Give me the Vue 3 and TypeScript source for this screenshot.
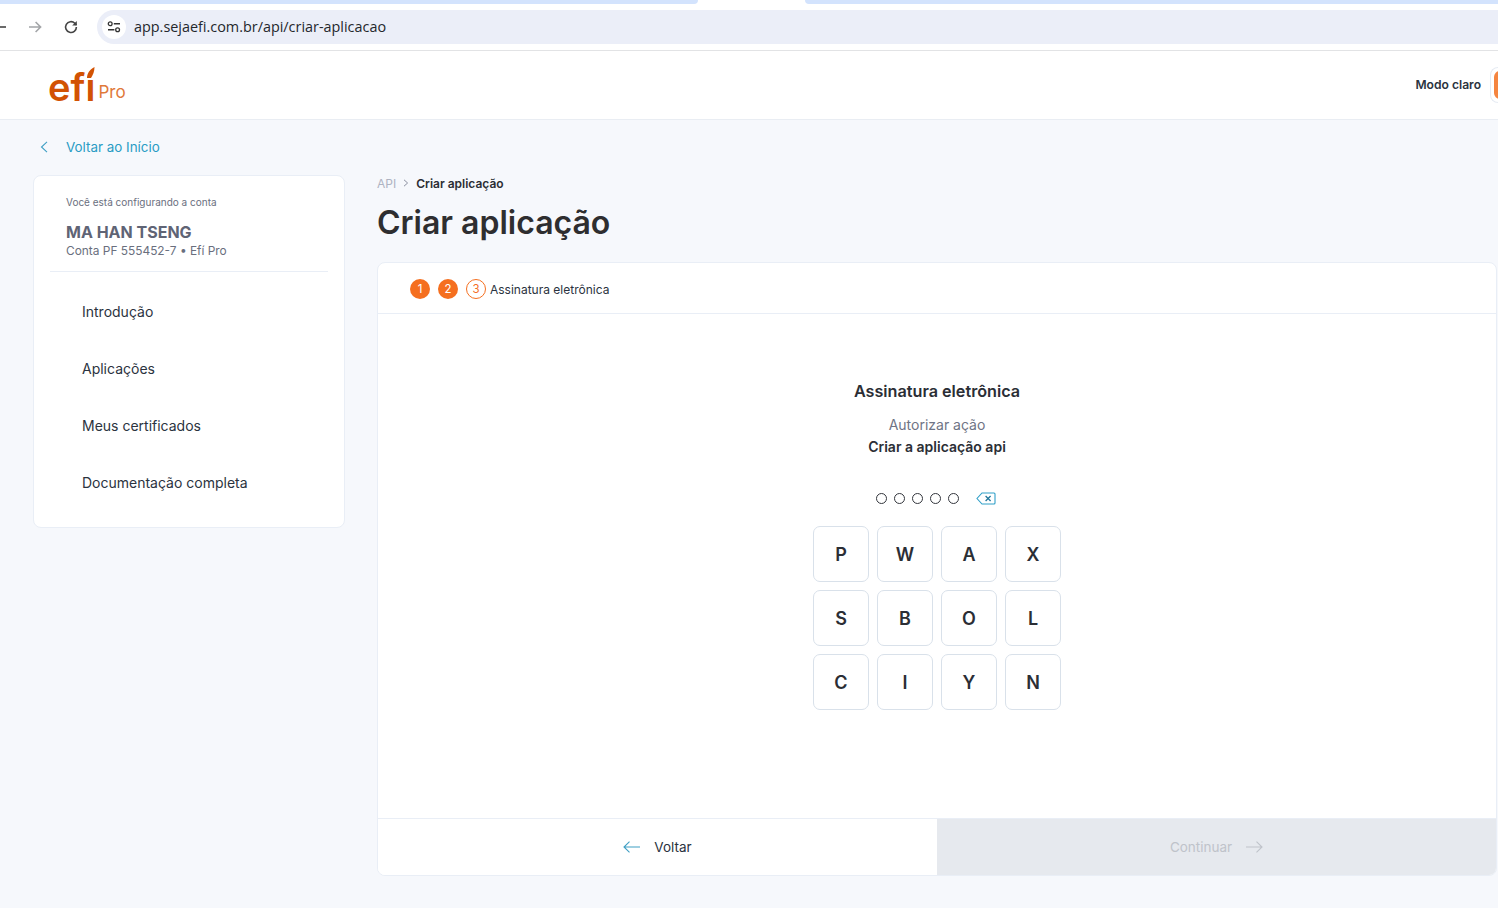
<script setup lang="ts">
const menu: string[] = ['Introdução', 'Aplicações', 'Meus certificados', 'Documentação completa']
const keys: string[] = ['P', 'W', 'A', 'X', 'S', 'B', 'O', 'L', 'C', 'I', 'Y', 'N']
const dots: number[] = [1, 2, 3, 4, 5]
</script>

<template>
  <div class="page">
    <div class="tabstrip">
      <div class="tab-a"></div>
      <div class="tab-b"></div>
    </div>
    <div class="toolbar">
      <svg class="nav-back" width="6" height="14" viewBox="0 0 6 14"><path d="M0 7h6" stroke="#444" stroke-width="1.6" /></svg>
      <svg class="nav-icon nav-fwd" width="16" height="16" viewBox="0 0 16 16"><path d="M2 8h11.5M8.6 3l5 5-5 5" fill="none" stroke="#a3a5a8" stroke-width="1.6" /></svg>
      <svg class="nav-icon nav-reload" width="16" height="16" viewBox="0 0 16 16"><path d="M13.400 8a5.400 5.400 0 1 1-1.600-3.800L13.400 6" fill="none" stroke="#444" stroke-width="1.6" /><path d="M13.800 1.900v4.600H9.200z" fill="#444" /></svg>
      <div class="omnibox">
        <span class="site-chip">
          <svg width="14" height="12" viewBox="0 0 14 12"><circle cx="3.2" cy="2.8" r="1.9" fill="none" stroke="#333" stroke-width="1.3" /><path d="M6.800 2.800h6.200M1 8.800h6.400" stroke="#333" stroke-width="1.4" /><circle cx="10.600" cy="8.800" r="1.9" fill="none" stroke="#333" stroke-width="1.3" /></svg>
        </span>
        <span class="url">app.sejaefi.com.br/api/criar-aplicacao</span>
      </div>
    </div>

    <header class="topbar">
      <div class="logo">
        <span class="logo-efi">
          efı
          <svg class="logo-accent" width="9" height="11" viewBox="0 0 9 11"><path d="M1 11C1 6 4 2.500 8.500 0 8.500 4 7 8 5 11z" fill="#d25203" /></svg>
        </span>
        <span class="logo-pro">Pro</span>
      </div>
      <div class="theme">
        <span class="theme-label">Modo claro</span>
        <div class="theme-switch"><div class="theme-knob"></div></div>
      </div>
    </header>

    <div class="backlink">
      <svg width="8" height="12" viewBox="0 0 8 12"><path d="M7 .8 1.500 6 7 11.200" fill="none" stroke="#3f9fc4" stroke-width="1.1" /></svg>
      <span>Voltar ao Início</span>
    </div>

    <div class="content">
      <aside class="sidebar">
        <div class="account">
          <p class="account-hint">Você está configurando a conta</p>
          <p class="account-name">MA HAN TSENG</p>
          <p class="account-sub">Conta PF 555452-7 • Efí Pro</p>
        </div>
        <nav class="menu">
          <a v-for="item in menu" :key="item" class="menu-item">{{ item }}</a>
        </nav>
      </aside>

      <main class="main">
        <div class="crumbs">
          <span class="crumb-root">API</span>
          <svg width="6" height="8" viewBox="0 0 6 8"><path d="M1 .8 4.600 4 1 7.200" fill="none" stroke="#8b90a0" stroke-width="1" /></svg>
          <span class="crumb-current">Criar aplicação</span>
        </div>
        <h1 class="title">Criar aplicação</h1>

        <section class="card">
          <div class="steps">
            <span class="step done">1</span>
            <span class="step done">2</span>
            <span class="step active">3</span>
            <span class="step-label">Assinatura eletrônica</span>
          </div>

          <div class="body">
            <h2 class="sign-title">Assinatura eletrônica</h2>
            <p class="sign-hint">Autorizar ação</p>
            <p class="sign-action">Criar a aplicação api</p>

            <div class="pin">
              <span v-for="d in dots" :key="d" class="dot"></span>
              <svg class="erase" width="20" height="13" viewBox="0 0 20 13">
                <path d="M6 1h12a1 1 0 0 1 1 1v9a1 1 0 0 1-1 1H6L1 6.500z" fill="#fff" stroke="#2f9fc8" stroke-width="1.1" />
                <path d="M9.600 4l5 5M14.600 4l-5 5" stroke="#23789c" stroke-width="1.3" />
              </svg>
            </div>

            <div class="keys">
              <button v-for="k in keys" :key="k" class="key" type="button">{{ k }}</button>
            </div>
          </div>

          <div class="actions">
            <button class="action back" type="button">
              <svg width="17" height="12" viewBox="0 0 17 12"><path d="M17 6H1M6.500.7 1 6l5.500 5.300" fill="none" stroke="#3f9fc4" stroke-width="1.1" /></svg>
              <span>Voltar</span>
            </button>
            <button class="action next" type="button">
              <span>Continuar</span>
              <svg width="17" height="12" viewBox="0 0 17 12"><path d="M0 6h16M10.500.7 16 6l-5.500 5.300" fill="none" stroke="#bfc3ca" stroke-width="1.1" /></svg>
            </button>
          </div>
        </section>
      </main>
    </div>
  </div>
</template>

<style>
html,
body {
  margin: 0;
  overflow: hidden;
  background: #f6f8fc;
}
</style>

<style scoped>
.page {
  width: 1498px;
  height: 908px;
  overflow: hidden;
  background: #f6f8fc;
  font-family: Inter, "Noto Sans", sans-serif;
  color: #2b2e35;
}

.tabstrip {
  display: flex;
  height: 4px;
  background: #fff;
}

.tab-a {
  width: 698px;
  background: #d3e3fd;
  border-bottom-right-radius: 6px;
}

.tab-b {
  margin-left: 107px;
  flex: 1;
  background: #d3e3fd;
  border-bottom-left-radius: 6px;
}

.toolbar {
  display: flex;
  align-items: center;
  height: 46px;
  background: #fff;
  border-bottom: 1px solid #e2e3e5;
}

.nav-fwd {
  margin-left: 21px;
}

.nav-reload {
  margin-left: 20px;
}

.omnibox {
  display: flex;
  align-items: center;
  height: 34px;
  margin-left: 18px;
  flex: 1;
  background: #ebeef8;
  border-radius: 17px 0 0 17px;
  padding-left: 5px;
}

.site-chip {
  display: flex;
  align-items: center;
  justify-content: center;
  width: 24px;
  height: 24px;
  border-radius: 50%;
  background: #fff;
}

.url {
  margin: 0 0 2px 8px;
  font-family: "Open Sans", sans-serif;
  font-size: 14.4px;
  color: #24272c;
}

.topbar {
  display: flex;
  align-items: center;
  justify-content: space-between;
  height: 68px;
  background: #fff;
  border-bottom: 1px solid #e9edf3;
}

.logo {
  display: flex;
  align-items: flex-end;
  margin: 4px 0 0 48px;
}

.logo-efi {
  position: relative;
  font-size: 38px;
  line-height: 34px;
  font-weight: 600;
  color: #d25203;
}

.logo-accent {
  position: absolute;
  right: 0;
  top: -3px;
}

.logo-pro {
  margin: 0 0 1px 3px;
  font-size: 17px;
  line-height: 22px;
  font-weight: 400;
  color: #e0793a;
}

.theme {
  display: flex;
  align-items: center;
  gap: 9px;
}

.theme-label {
  margin-bottom: 2px;
  font-size: 12.1px;
  font-weight: 600;
  color: #2b3340;
}

.theme-switch {
  width: 8px;
  height: 36px;
  padding: 3px 0 3px 3px;
  box-sizing: border-box;
  border: 1px solid #e6ebf3;
  border-right: 0;
  border-radius: 8px 0 0 8px;
  background: #fff;
}

.theme-knob {
  width: 10px;
  height: 100%;
  background: #f58540;
  border-radius: 6px 0 0 6px;
}

.backlink {
  display: flex;
  align-items: center;
  gap: 18px;
  height: 53px;
  padding: 0 0 2px 40px;
  font-size: 13.4px;
  color: #2a9cc4;
}

.content {
  display: flex;
  align-items: flex-start;
  gap: 32px;
  padding-left: 33px;
}

.sidebar {
  width: 312px;
  height: 353px;
  flex-shrink: 0;
  box-sizing: border-box;
  background: #fff;
  border: 1px solid #e9eef6;
  border-radius: 8px;
}

.account {
  margin: 0 16px;
  padding: 19px 16px 11px;
  border-bottom: 1px solid #e9eef6;
}

.account p {
  margin: 0;
}

.account-hint {
  font-size: 10px;
  line-height: 14px;
  color: #6a6f7e;
}

.account .account-name {
  margin-top: 13px;
  font-size: 16px;
  line-height: 20px;
  font-weight: 700;
  color: #5f6475;
}

.account-sub {
  font-size: 11.9px;
  line-height: 18px;
  color: #6a6f7e;
}

.menu {
  display: flex;
  flex-direction: column;
  padding-top: 11px;
}

.menu-item {
  height: 57px;
  line-height: 57px;
  padding-left: 48px;
  font-size: 14px;
  color: #2b3340;
}

.main {
  width: 1120px;
  flex-shrink: 0;
}

.crumbs {
  display: flex;
  align-items: center;
  gap: 7px;
  height: 16px;
  font-size: 12px;
}

.crumb-root {
  color: #aeb3c2;
}

.crumb-current {
  font-weight: 600;
  color: #2b2e35;
}

.title {
  margin: 12px 0 19px;
  font-size: 32px;
  line-height: 40px;
  font-weight: 600;
  color: #2e2e30;
}

.card {
  display: flex;
  flex-direction: column;
  height: 614px;
  box-sizing: border-box;
  background: #fff;
  border: 1px solid #e9eef6;
  border-radius: 8px;
  overflow: hidden;
}

.steps {
  display: flex;
  align-items: center;
  height: 51px;
  box-sizing: border-box;
  flex-shrink: 0;
  padding: 2px 0 0 32px;
  border-bottom: 1px solid #e9eef6;
}

.step {
  display: flex;
  align-items: center;
  justify-content: center;
  width: 20px;
  height: 20px;
  margin-right: 8px;
  box-sizing: border-box;
  border-radius: 50%;
  font-size: 11.5px;
}

.step.done {
  background: #f56f1f;
  color: #fff;
}

.step.active {
  margin-right: 4px;
  border: 1px solid #f56f1f;
  color: #f56f1f;
}

.step-label {
  font-size: 12px;
  color: #2b3340;
}

.body {
  flex: 1;
  display: flex;
  flex-direction: column;
  align-items: center;
  padding-top: 65px;
}

.sign-title {
  margin: 0;
  font-size: 16.2px;
  line-height: 24px;
  font-weight: 600;
  color: #2b2e35;
}

.sign-hint {
  margin: 11px 0 0;
  font-size: 14px;
  line-height: 22px;
  color: #6f7485;
}

.sign-action {
  margin: 0;
  font-size: 14px;
  line-height: 22px;
  font-weight: 600;
  color: #2b2e35;
}

.pin {
  display: flex;
  align-items: center;
  gap: 7px;
  height: 16px;
  margin-top: 32px;
  padding-right: 2px;
}

.dot {
  width: 11px;
  height: 11px;
  box-sizing: border-box;
  border: 1px solid #33363d;
  border-radius: 50%;
}

.erase {
  margin-left: 10px;
}

.keys {
  display: grid;
  grid-template-columns: repeat(4, 56px);
  grid-auto-rows: 56px;
  gap: 8px;
  margin-top: 20px;
}

.key {
  box-sizing: border-box;
  padding: 0;
  background: #fff;
  border: 1px solid #d9e1ea;
  border-radius: 7px;
  font-family: inherit;
  font-size: 18px;
  font-weight: 600;
  color: #2b2e35;
}

.actions {
  display: grid;
  grid-template-columns: 1fr 1fr;
  height: 56px;
  flex-shrink: 0;
  border-top: 1px solid #e9eef6;
}

.action {
  display: flex;
  align-items: center;
  justify-content: center;
  gap: 14px;
  border: 0;
  padding: 0;
  font-family: inherit;
  font-size: 13.5px;
}

.back {
  background: #fff;
  color: #2b3340;
}

.next {
  background: #e6e9ee;
  color: #bfc3ca;
}
</style>
